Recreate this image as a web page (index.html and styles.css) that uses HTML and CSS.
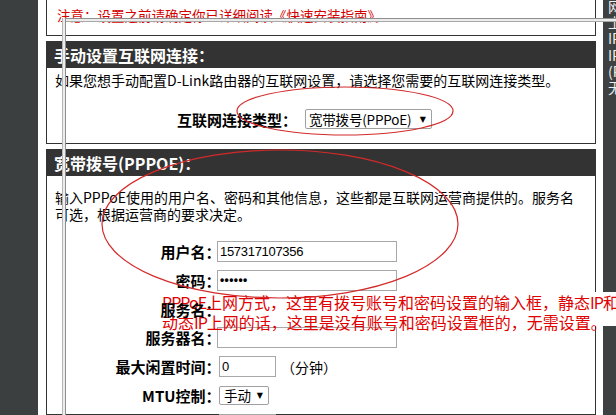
FILE: index.html
```html
<!DOCTYPE html>
<html lang="zh-CN">
<head>
<meta charset="utf-8">
<title>D-Link 手动设置互联网连接</title>
<link rel="stylesheet" href="styles.css">
</head>
<body>
<div class="page">
  <div class="side-left"></div>
  <div class="main">
    <div class="notice">注意：设置之前请确定你已详细阅读《快速安装指南》。</div>

    <div class="section">
      <div class="sec-head">手动设置互联网连接：</div>
      <div class="sec-body body-conn">
        <p class="desc desc-conn">如果您想手动配置D-Link路由器的互联网设置，请选择您需要的互联网连接类型。</p>
        <div class="conn-row">
          <span class="conn-label">互联网连接类型：</span>
          <span class="select sel-type"><span class="sel-text">宽带拨号(PPPoE)</span><span class="arrow">▼</span></span>
        </div>
      </div>
    </div>

    <div class="section">
      <div class="sec-head">宽带拨号(PPPOE)：</div>
      <div class="sec-body body-pppoe">
        <p class="desc desc-pppoe">输入PPPoE使用的用户名、密码和其他信息，这些都是互联网运营商提供的。服务名<br>可选，根据运营商的要求决定。</p>
        <div class="form">
          <span class="label">用户名：</span>
          <span class="input wide">157317107356</span>
          <span class="label">密码：</span>
          <span class="input wide dots">••••••</span>
          <span class="label label-over">服务名：</span>
          <span class="input wide"></span>
          <span class="label">服务器名：</span>
          <span class="input wide"></span>
          <span class="label">最大闲置时间：</span>
          <span class="field-line"><span class="input short">0</span><span class="unit">（分钟）</span></span>
          <span class="label">MTU控制：</span>
          <span class="field-line"><span class="select sel-mtu"><span class="sel-text">手动</span><span class="arrow">▼</span></span></span>
          <span class="label"></span>
          <span class="field-line"><span class="input short"></span></span>
        </div>
      </div>
    </div>
  </div>
  <div class="side-right">
    <div class="side-text">网<br>上<br>IP<br>IP<br>(P<br>无</div>
  </div>
</div>

<div class="note"><span class="lat">PPPoE</span>上网方式，这里有拨号账号和密码设置的输入框，静态<span class="lat">IP</span>和<br>动态<span class="lat">IP</span>上网的话，这里是没有账号和密码设置框的，无需设置。</div>

<svg class="marks" width="616" height="415" viewBox="0 0 616 415" aria-hidden="true">
  <ellipse cx="345" cy="111" rx="108" ry="24" fill="none" stroke="#d32a2a" stroke-width="1.2"/>
  <ellipse cx="280" cy="224" rx="178" ry="74" fill="none" stroke="#d32a2a" stroke-width="1.2"/>
</svg>

<div class="line-h"></div>
<div class="line-v"></div>
</body>
</html>
```

FILE: styles.css
```css
html, body {
  margin: 0;
  padding: 0;
}

body {
  width: 616px;
  height: 415px;
  overflow: hidden;
  position: relative;
  background: #ffffff;
  font-family: "Noto Sans CJK SC", "Noto Sans", sans-serif;
  color: #000000;
}

.page {
  display: flex;
  height: 415px;
  overflow: hidden;
}

.side-left {
  flex: none;
  width: 38px;
  background: #3c3f3f;
}

.main {
  flex: none;
  width: 550px;
  margin-left: 8px;
}

.side-right {
  flex: none;
  width: 13px;
  margin-left: 7px;
  background: #3e4141;
  overflow: hidden;
}

.side-text {
  margin-top: -2px;
  padding-left: 5px;
  color: #eeeeee;
  font-size: 14px;
  line-height: 16.2px;
  white-space: nowrap;
}

.notice {
  box-sizing: border-box;
  height: 36px;
  border: 1px solid #333333;
  border-top: none;
  padding: 6px 0 0 10px;
  color: #d40000;
  font-size: 13.5px;
  line-height: 18px;
  white-space: nowrap;
  overflow: hidden;
}

.section {
  margin-top: 5px;
}

.sec-head {
  box-sizing: border-box;
  height: 27px;
  background: #333333;
  color: #ffffff;
  font-size: 16px;
  font-weight: bold;
  line-height: 25px;
  padding: 2px 0 0 8px;
  font-feature-settings: "halt";
}

.sec-body {
  box-sizing: border-box;
  border: 1px solid #333333;
  border-top: none;
}

.body-conn {
  height: 76px;
}

.body-pppoe {
  height: 239px;
}

.desc {
  margin: 0;
  padding: 0 8px;
  font-size: 14px;
  white-space: nowrap;
}

.desc-conn {
  padding-top: 3px;
  line-height: 18px;
}

.desc-pppoe {
  padding-top: 13px;
  line-height: 17px;
}

.conn-row {
  display: flex;
  align-items: center;
  height: 20px;
  margin-top: 20px;
}

.conn-label {
  width: 250px;
  text-align: right;
  font-size: 15px;
  font-weight: bold;
}

.select {
  box-sizing: border-box;
  display: inline-flex;
  align-items: center;
  height: 19px;
  border: 1px solid #a0a0a0;
  border-radius: 2px;
  background: #ffffff;
  font-size: 14px;
  line-height: 17px;
  padding: 0 4px;
  white-space: nowrap;
  overflow: hidden;
}

.sel-text {
  flex: 1;
}

.sel-type {
  width: 127px;
  margin-left: 8px;
  height: 20px;
  font-size: 13.5px;
  letter-spacing: -0.2px;
  padding: 0 5px 0 3px;
}

.sel-mtu {
  width: 50px;
  margin-left: 2px;
  font-size: 13.5px;
  padding: 0 5px 0 4px;
}

.arrow {
  flex: none;
  font-size: 8px;
  line-height: 17px;
  letter-spacing: 0;
  font-family: "DejaVu Sans", sans-serif;
}

.form {
  display: grid;
  grid-template-columns: 166px auto;
  column-gap: 4px;
  row-gap: 7.8px;
  grid-auto-rows: 21px;
  align-items: center;
  margin-top: 18px;
}

.label {
  text-align: right;
  font-size: 15px;
  font-weight: bold;
  line-height: 21px;
  white-space: nowrap;
  font-feature-settings: "halt";
}

.label-over {
  position: relative;
  z-index: 2;
}

.input {
  box-sizing: border-box;
  display: block;
  height: 21px;
  border: 1px solid #a8a8a8;
  background: #ffffff;
  padding-left: 2px;
  font-family: "Liberation Sans", Arial, sans-serif;
  font-size: 13px;
  letter-spacing: -0.3px;
  line-height: 19px;
  white-space: nowrap;
}

.wide {
  width: 180px;
}

.short {
  width: 57px;
  margin-left: 2px;
}

.dots {
  font-size: 12px;
  letter-spacing: 0.4px;
  font-weight: bold;
}

.field-line {
  display: flex;
  align-items: center;
}

.unit {
  margin-left: 5px;
  font-size: 14px;
}

.note {
  position: absolute;
  left: 162px;
  top: 292px;
  right: 0;
  height: 34px;
  z-index: 1;
  background: #ffffff;
  color: #e00000;
  font-size: 16px;
  line-height: 20px;
  white-space: nowrap;
}

.note .lat {
  letter-spacing: -1px;
}

.marks {
  position: absolute;
  left: 0;
  top: 0;
  z-index: 3;
  pointer-events: none;
}

.line-h {
  position: absolute;
  left: 62px;
  top: 18px;
  width: 554px;
  height: 4px;
  box-sizing: border-box;
  background: #ececec;
  border-top: 1px solid #8e8e8e;
  border-bottom: 1px solid #a9a9a9;
  z-index: 4;
}

.line-v {
  position: absolute;
  left: 62px;
  top: 18px;
  width: 4px;
  height: 397px;
  box-sizing: border-box;
  background: #ececec;
  border-left: 1px solid #b5b5b5;
  border-right: 1px solid #8e8e8e;
  z-index: 4;
}
```
